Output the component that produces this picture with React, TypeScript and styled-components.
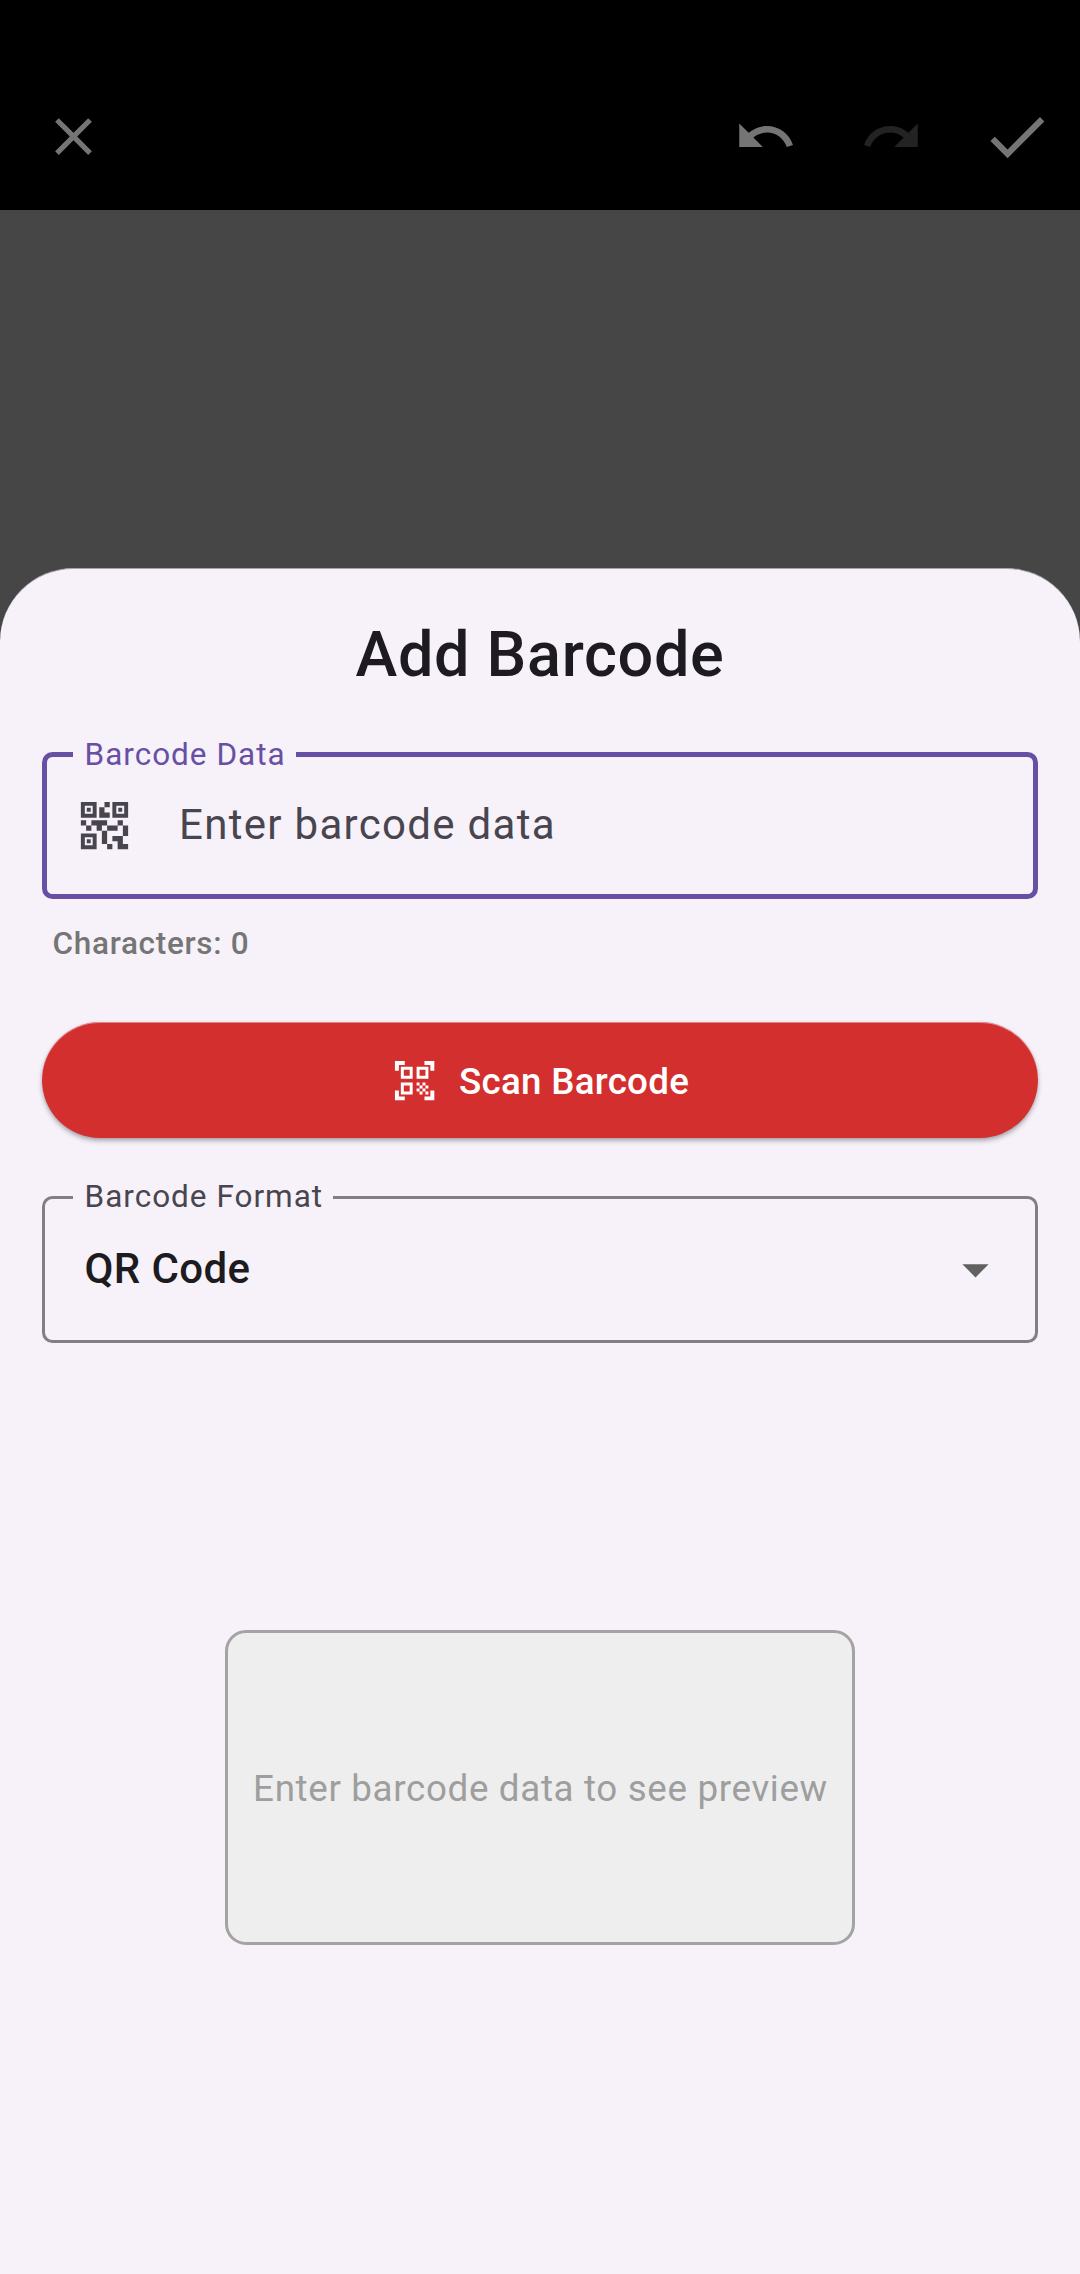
import React from "react";
import styled, { createGlobalStyle } from "styled-components";
import {
  MdArrowDropDown,
  MdCheck,
  MdClose,
  MdQrCode2,
  MdQrCodeScanner,
  MdRedo,
  MdUndo,
} from "react-icons/md";

const Global = createGlobalStyle`
  * { box-sizing: border-box; }
  body { margin: 0; background: #464646; font-family: Roboto, "Noto Sans", sans-serif; }
  svg { display: block; flex: none; }
`;

const Screen = styled.div`
  display: flex;
  flex-direction: column;
  width: 1080px;
  height: 2274px;
  overflow: hidden;
  background: #464646;
`;

const AppBar = styled.header`
  display: flex;
  align-items: center;
  height: 210px;
  padding: 63px 26.4px 0 42px;
  background: #000;
`;

const BarButton = styled.button<{ $end?: number; $dim?: boolean }>`
  display: flex;
  padding: 0;
  margin-right: ${(p) => p.$end ?? 0}px;
  border: 0;
  background: none;
  color: ${(p) => (p.$dim ? "#232323" : "#757575")};
`;

const Spacer = styled.div`
  flex: 1;
`;

const Sheet = styled.main`
  display: flex;
  flex-direction: column;
  flex: 1;
  margin-top: 358px;
  padding: 44px 42px 0;
  border-radius: 73.5px 73.5px 0 0;
  border-top: 1px solid #a9a6aa;
  background: #f7f2fa;
`;

const Title = styled.h1`
  margin: 0 0 39px;
  font-size: 63px;
  font-weight: 500;
  line-height: 84px;
  letter-spacing: 0.66px;
  text-align: center;
  color: #1d1b20;
`;

const Field = styled.fieldset<{ $active?: boolean }>`
  height: ${(p) => (p.$active ? 163 : 164)}px;
  min-width: 0;
  margin: 0;
  padding: 0;
  border: ${(p) => (p.$active ? "5px solid #6750a4" : "3px solid #827d87")};
  border-radius: 10.5px;
  color: ${(p) => (p.$active ? "#6750a4" : "#49454f")};
`;

const Label = styled.legend<{ $inset: number; $line: number }>`
  height: 37px;
  margin-left: ${(p) => p.$inset}px;
  padding: 0 10px 0 11.5px;
  font-size: 31.5px;
  line-height: ${(p) => p.$line}px;
  letter-spacing: 1px;
`;

const FieldRow = styled.div<{ $left: number }>`
  display: flex;
  align-items: center;
  height: 105px;
  padding: 0 28.5px 0 ${(p) => p.$left}px;
  color: #49454f;
`;

const Placeholder = styled.span`
  margin: 0 0 2px 43px;
  font-size: 42px;
  line-height: 62px;
  letter-spacing: 1.3px;
`;

const Counter = styled.p`
  margin: 24px 0 57px 10.5px;
  font-size: 31.5px;
  font-weight: 500;
  line-height: 42px;
  letter-spacing: 0.7px;
  color: #757575;
`;

const ScanButton = styled.button`
  display: flex;
  flex: none;
  align-items: center;
  justify-content: center;
  gap: 21px;
  height: 116px;
  margin-bottom: 41px;
  padding: 1px 0 0;
  border: 0;
  border-radius: 58px;
  background: #d32f2f;
  box-shadow: inset 0 1px 0 rgba(247, 242, 250, 0.45),
    0 3px 5px rgba(0, 0, 0, 0.28), 0 1px 3px rgba(0, 0, 0, 0.1);
  color: #fff;
  font: 500 36.75px/52px Roboto, "Noto Sans", sans-serif;
  letter-spacing: 0.26px;
`;

const ButtonText = styled.span`
  padding-top: 2px;
`;

const Selected = styled.span`
  flex: 1;
  font-size: 42px;
  font-weight: 500;
  line-height: 62px;
  letter-spacing: 0.4px;
  color: #1d1b20;
`;

const DropArrow = styled(MdArrowDropDown)`
  margin-top: 1.5px;
  color: #616161;
`;

const Preview = styled.section`
  display: flex;
  align-items: center;
  justify-content: center;
  align-self: center;
  width: 630px;
  height: 315px;
  margin-top: 287px;
  padding: 2px 0 0 1px;
  border: 3px solid #a3a3a3;
  border-radius: 21px;
  background: #eee;
  font-size: 36.75px;
  letter-spacing: 0.66px;
  white-space: nowrap;
  color: #9e9e9e;
`;

export default function App() {
  return (
    <Screen>
      <Global />
      <AppBar>
        <BarButton aria-label="Close"><MdClose size={63} /></BarButton>
        <Spacer />
        <BarButton aria-label="Undo" $end={63}><MdUndo size={63} /></BarButton>
        <BarButton aria-label="Redo" $end={57.5} $dim><MdRedo size={63} /></BarButton>
        <BarButton aria-label="Done"><MdCheck size={73.5} /></BarButton>
      </AppBar>
      <Sheet>
        <Title>Add Barcode</Title>
        <Field $active>
          <Label $inset={26} $line={38}>Barcode Data</Label>
          <FieldRow $left={26}>
            <MdQrCode2 size={63} />
            <Placeholder>Enter barcode data</Placeholder>
          </FieldRow>
        </Field>
        <Counter>Characters: 0</Counter>
        <ScanButton>
          <MdQrCodeScanner size={47.25} />
          <ButtonText>Scan Barcode</ButtonText>
        </ScanButton>
        <Field>
          <Label $inset={28} $line={36}>Barcode Format</Label>
          <FieldRow $left={39.5}>
            <Selected>QR Code</Selected>
            <DropArrow size={63} />
          </FieldRow>
        </Field>
        <Preview>Enter barcode data to see preview</Preview>
      </Sheet>
    </Screen>
  );
}
